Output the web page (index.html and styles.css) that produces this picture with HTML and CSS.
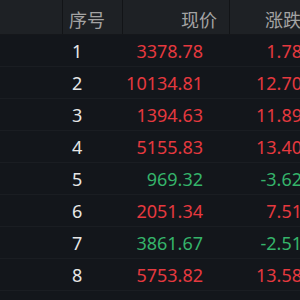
FILE: index.html
```html
<!DOCTYPE html>
<html lang="zh-CN">
<head>
<meta charset="utf-8">
<link rel="stylesheet" href="styles.css">
</head>
<body>
<div class="table">
  <div class="row head">
    <div class="cell name"></div>
    <div class="cell idx">序号</div>
    <div class="cell price">现价</div>
    <div class="cell chg">涨跌幅</div>
  </div>
  <div class="row"><div class="cell name"></div><div class="cell idx">1</div><div class="cell price up">3378.78</div><div class="cell chg up">1.78%</div></div>
  <div class="row"><div class="cell name"></div><div class="cell idx">2</div><div class="cell price up">10134.81</div><div class="cell chg up">12.70%</div></div>
  <div class="row"><div class="cell name"></div><div class="cell idx">3</div><div class="cell price up">1394.63</div><div class="cell chg up">11.89%</div></div>
  <div class="row"><div class="cell name"></div><div class="cell idx">4</div><div class="cell price up">5155.83</div><div class="cell chg up">13.40%</div></div>
  <div class="row"><div class="cell name"></div><div class="cell idx">5</div><div class="cell price down">969.32</div><div class="cell chg down">-3.62%</div></div>
  <div class="row"><div class="cell name"></div><div class="cell idx">6</div><div class="cell price up">2051.34</div><div class="cell chg up">7.51%</div></div>
  <div class="row"><div class="cell name"></div><div class="cell idx">7</div><div class="cell price down">3861.67</div><div class="cell chg down">-2.51%</div></div>
  <div class="row"><div class="cell name"></div><div class="cell idx">8</div><div class="cell price up">5753.82</div><div class="cell chg up">13.58%</div></div>
</div>
</body>
</html>
```

FILE: styles.css
```css
html, body {
  margin: 0;
  padding: 0;
  width: 300px;
  height: 300px;
  overflow: hidden;
  background: #13161b;
}

.table {
  width: 340px;
  font-family: "Noto Sans", "Noto Sans CJK SC", sans-serif;
  font-size: 18px;
}

.row {
  display: grid;
  grid-template-columns: 63px 60px 107px 110px;
  height: 32px;
  align-items: center;
  border-bottom: 1px solid #1a1d22;
  box-sizing: border-box;
}

.row.head {
  height: 35px;
  background: #1e2125;
  border-bottom: 1px solid #15171b;
  align-items: stretch;
}

.head .cell {
  color: #a3a3a3;
  font-family: "Noto Sans CJK SC", sans-serif;
  display: flex;
  align-items: center;
  padding-top: 4px;
  box-sizing: border-box;
  border-right: 1px solid #121417;
}

.cell {
  white-space: nowrap;
  line-height: 1;
}

.idx {
  color: #e6e6e6;
  padding-left: 9px;
}

.head .idx {
  padding-left: 6px;
}

.price {
  text-align: right;
  padding-right: 27px;
}

.head .price {
  justify-content: flex-end;
  padding-right: 12px;
}

.chg {
  text-align: right;
  padding-right: 23px;
}

.head .chg {
  justify-content: flex-start;
  padding-left: 35px;
  border-right: none;
}

.up {
  color: #e5393f;
}

.down {
  color: #35b36a;
}
```
